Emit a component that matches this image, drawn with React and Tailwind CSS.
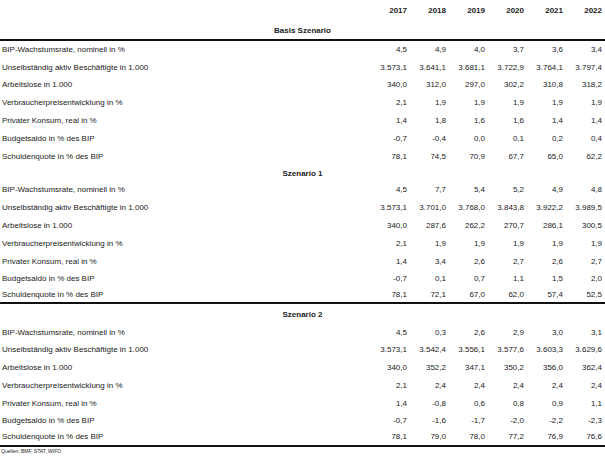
const years = ["2017", "2018", "2019", "2020", "2021", "2022"];

const labels = [
  "BIP-Wachstumsrate, nominell in %",
  "Unselbständig aktiv Beschäftigte in 1.000",
  "Arbeitslose in 1.000",
  "Verbraucherpreisentwicklung in %",
  "Privater Konsum, real in %",
  "Budgetsaldo in % des BIP",
  "Schuldenquote in % des BIP",
];

const scenarios = [
  {
    title: "Basis Szenario",
    headH: "h-[17px]",
    rowH: ["h-[17.8px]", "h-[17.8px]", "h-[17.8px]", "h-[17.8px]", "h-[17.8px]", "h-[17.8px]", "h-[17.8px]"],
    rows: [
      ["4,5", "4,9", "4,0", "3,7", "3,6", "3,4"],
      ["3.573,1", "3.641,1", "3.681,1", "3.722,9", "3.764,1", "3.797,4"],
      ["340,0", "312,0", "297,0", "302,2", "310,8", "318,2"],
      ["2,1", "1,9", "1,9", "1,9", "1,9", "1,9"],
      ["1,4", "1,8", "1,6", "1,6", "1,4", "1,4"],
      ["-0,7", "-0,4", "0,0", "0,1", "0,2", "0,4"],
      ["78,1", "74,5", "70,9", "67,7", "65,0", "62,2"],
    ],
  },
  {
    title: "Szenario 1",
    headH: "h-[16px]",
    rowH: ["h-[17.8px]", "h-[17.8px]", "h-[17.8px]", "h-[17.8px]", "h-[17.8px]", "h-[17.8px]", "h-[14px]"],
    rows: [
      ["4,5", "7,7", "5,4", "5,2", "4,9", "4,8"],
      ["3.573,1", "3.701,0", "3.768,0", "3.843,8", "3.922,2", "3.989,5"],
      ["340,0", "287,6", "262,2", "270,7", "286,1", "300,5"],
      ["2,1", "1,9", "1,9", "1,9", "1,9", "1,9"],
      ["1,4", "3,4", "2,6", "2,7", "2,6", "2,7"],
      ["-0,7", "0,1", "0,7", "1,1", "1,5", "2,0"],
      ["78,1", "72,1", "67,0", "62,0", "57,4", "52,5"],
    ],
    ruleAfter: true,
  },
  {
    title: "Szenario 2",
    headH: "h-[21px]",
    rowH: ["h-[16px]", "h-[17.8px]", "h-[17.8px]", "h-[17.8px]", "h-[17.8px]", "h-[17px]", "h-[15px]"],
    rows: [
      ["4,5", "0,3", "2,6", "2,9", "3,0", "3,1"],
      ["3.573,1", "3.542,4", "3.556,1", "3.577,6", "3.603,3", "3.629,6"],
      ["340,0", "352,2", "347,1", "350,2", "356,0", "362,4"],
      ["2,1", "2,4", "2,4", "2,4", "2,4", "2,4"],
      ["1,4", "-0,8", "0,6", "0,8", "0,9", "1,1"],
      ["-0,7", "-1,6", "-1,7", "-2,0", "-2,2", "-2,3"],
      ["78,1", "79,0", "78,0", "77,2", "76,9", "76,6"],
    ],
    ruleAfter: true,
  },
];

function Row({ label, values, h }) {
  return (
    <div className={`grid grid-cols-[1fr_repeat(6,39px)] items-center pr-[3px] ${h}`}>
      <div className="pl-[2px] whitespace-nowrap">{label}</div>
      {values.map((v, i) => (
        <div key={i} className="text-right whitespace-nowrap">
          {v}
        </div>
      ))}
    </div>
  );
}

export default function App() {
  return (
    <div
      className="w-[605px] h-[458px] overflow-hidden bg-white text-[8px] leading-none text-[#1a1a1a]"
      style={{ fontFamily: '"Liberation Sans", Arial, sans-serif' }}
    >
      {/* Year header */}
      <div className="grid h-[22px] grid-cols-[1fr_repeat(6,39px)] items-center pr-[3px] font-bold">
        <div />
        {years.map((y) => (
          <div key={y} className="text-right">
            {y}
          </div>
        ))}
      </div>

      {scenarios.map((s, si) => (
        <div key={s.title}>
          <div className={`flex items-center justify-center font-bold ${s.headH}`}>{s.title}</div>
          {si === 0 && <div className="h-[2px] bg-[#111]" />}
          {s.rows.map((r, i) => (
            <Row key={i} label={labels[i]} values={r} h={s.rowH[i]} />
          ))}
          {s.ruleAfter && <div className="h-[2px] bg-[#111]" />}
        </div>
      ))}

      {/* Source line */}
      <div className="pl-[1px] pt-[2px] text-[5px] leading-none">Quellen: BMF, STAT, WIFO</div>
    </div>
  );
}
